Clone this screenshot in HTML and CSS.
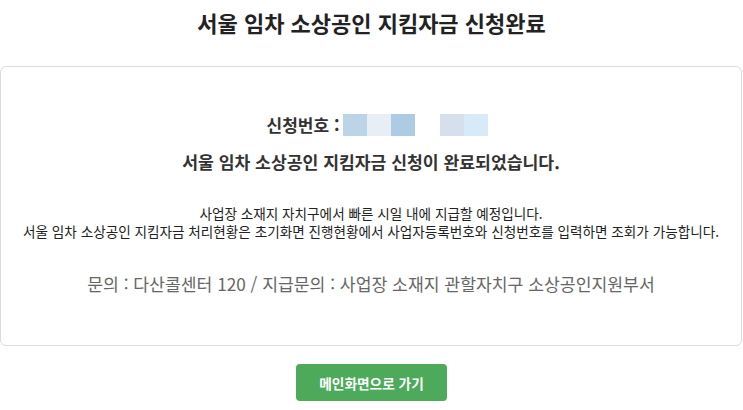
FILE: index.html
```html
<!DOCTYPE html>
<html lang="ko">
<head>
<meta charset="utf-8">
<link rel="stylesheet" href="styles.css">
</head>
<body>
<div class="page">
  <h1 class="title">서울 임차 소상공인 지킴자금 신청완료</h1>
  <div class="card">
    <div class="appno">
      <span class="appno-label">신청번호 :</span>
      <span class="blur">
        <i class="b1"></i><i class="b2"></i><i class="b3"></i><i class="gap"></i><i class="b4"></i><i class="b5"></i>
      </span>
    </div>
    <p class="done">서울 임차 소상공인 지킴자금 신청이 완료되었습니다.</p>
    <p class="info">사업장 소재지 자치구에서 빠른 시일 내에 지급할 예정입니다.<br>서울 임차 소상공인 지킴자금 처리현황은 초기화면 진행현황에서 사업자등록번호와 신청번호를 입력하면 조회가 가능합니다.</p>
    <p class="contact">문의 : 다산콜센터 120 / 지급문의 : 사업장 소재지 관할자치구 소상공인지원부서</p>
  </div>
  <div class="actions">
    <a class="btn" href="#">메인화면으로 가기</a>
  </div>
</div>
</body>
</html>
```
FILE: styles.css
```css
html, body {
  margin: 0;
  padding: 0;
  background: #fff;
}
body {
  font-family: "Noto Sans CJK KR", "Noto Sans", sans-serif;
  color: #333;
}
.page {
  width: 743px;
  padding-top: 6px;
}
.title {
  margin: 0;
  font-size: 22px;
  line-height: 32px;
  font-weight: 700;
  color: #222;
  text-align: center;
}
.card {
  margin: 28px 1px 0 0;
  border: 1px solid #dcdcdc;
  border-radius: 6px;
  padding: 47px 0 49px;
  text-align: center;
}
.appno {
  display: flex;
  justify-content: center;
  align-items: center;
  height: 22px;
  gap: 4px;
  padding-left: 13px;
}
.appno-label {
  font-size: 17px;
  font-weight: 700;
  color: #333;
  line-height: 22px;
}
.blur {
  display: flex;
  height: 22px;
}
.blur i {
  display: block;
  width: 24px;
  height: 22px;
}
.blur .b1 { background: #bcd4e8; }
.blur .b2 { background: #e8eef5; }
.blur .b3 { background: #aecbe5; }
.blur .gap { width: 25px; background: transparent; }
.blur .b4 { background: #d5e0ec; }
.blur .b5 { background: #d8e9f8; }
.done {
  margin: 14px 0 0;
  font-size: 17.2px;
  line-height: 24px;
  font-weight: 700;
  color: #333;
}
.info {
  margin: 30px 0 0;
  font-size: 13.6px;
  line-height: 18px;
  color: #222;
}
.contact {
  margin: 32px 0 0;
  font-size: 17.2px;
  line-height: 24px;
  color: #666;
}
.actions {
  display: flex;
  justify-content: center;
  margin-top: 18px;
}
.btn {
  display: flex;
  align-items: center;
  justify-content: center;
  width: 151px;
  height: 37px;
  background: #4caa5a;
  border-radius: 4px;
  color: #fff;
  font-size: 13.7px;
  font-weight: 700;
  text-decoration: none;
}
```
